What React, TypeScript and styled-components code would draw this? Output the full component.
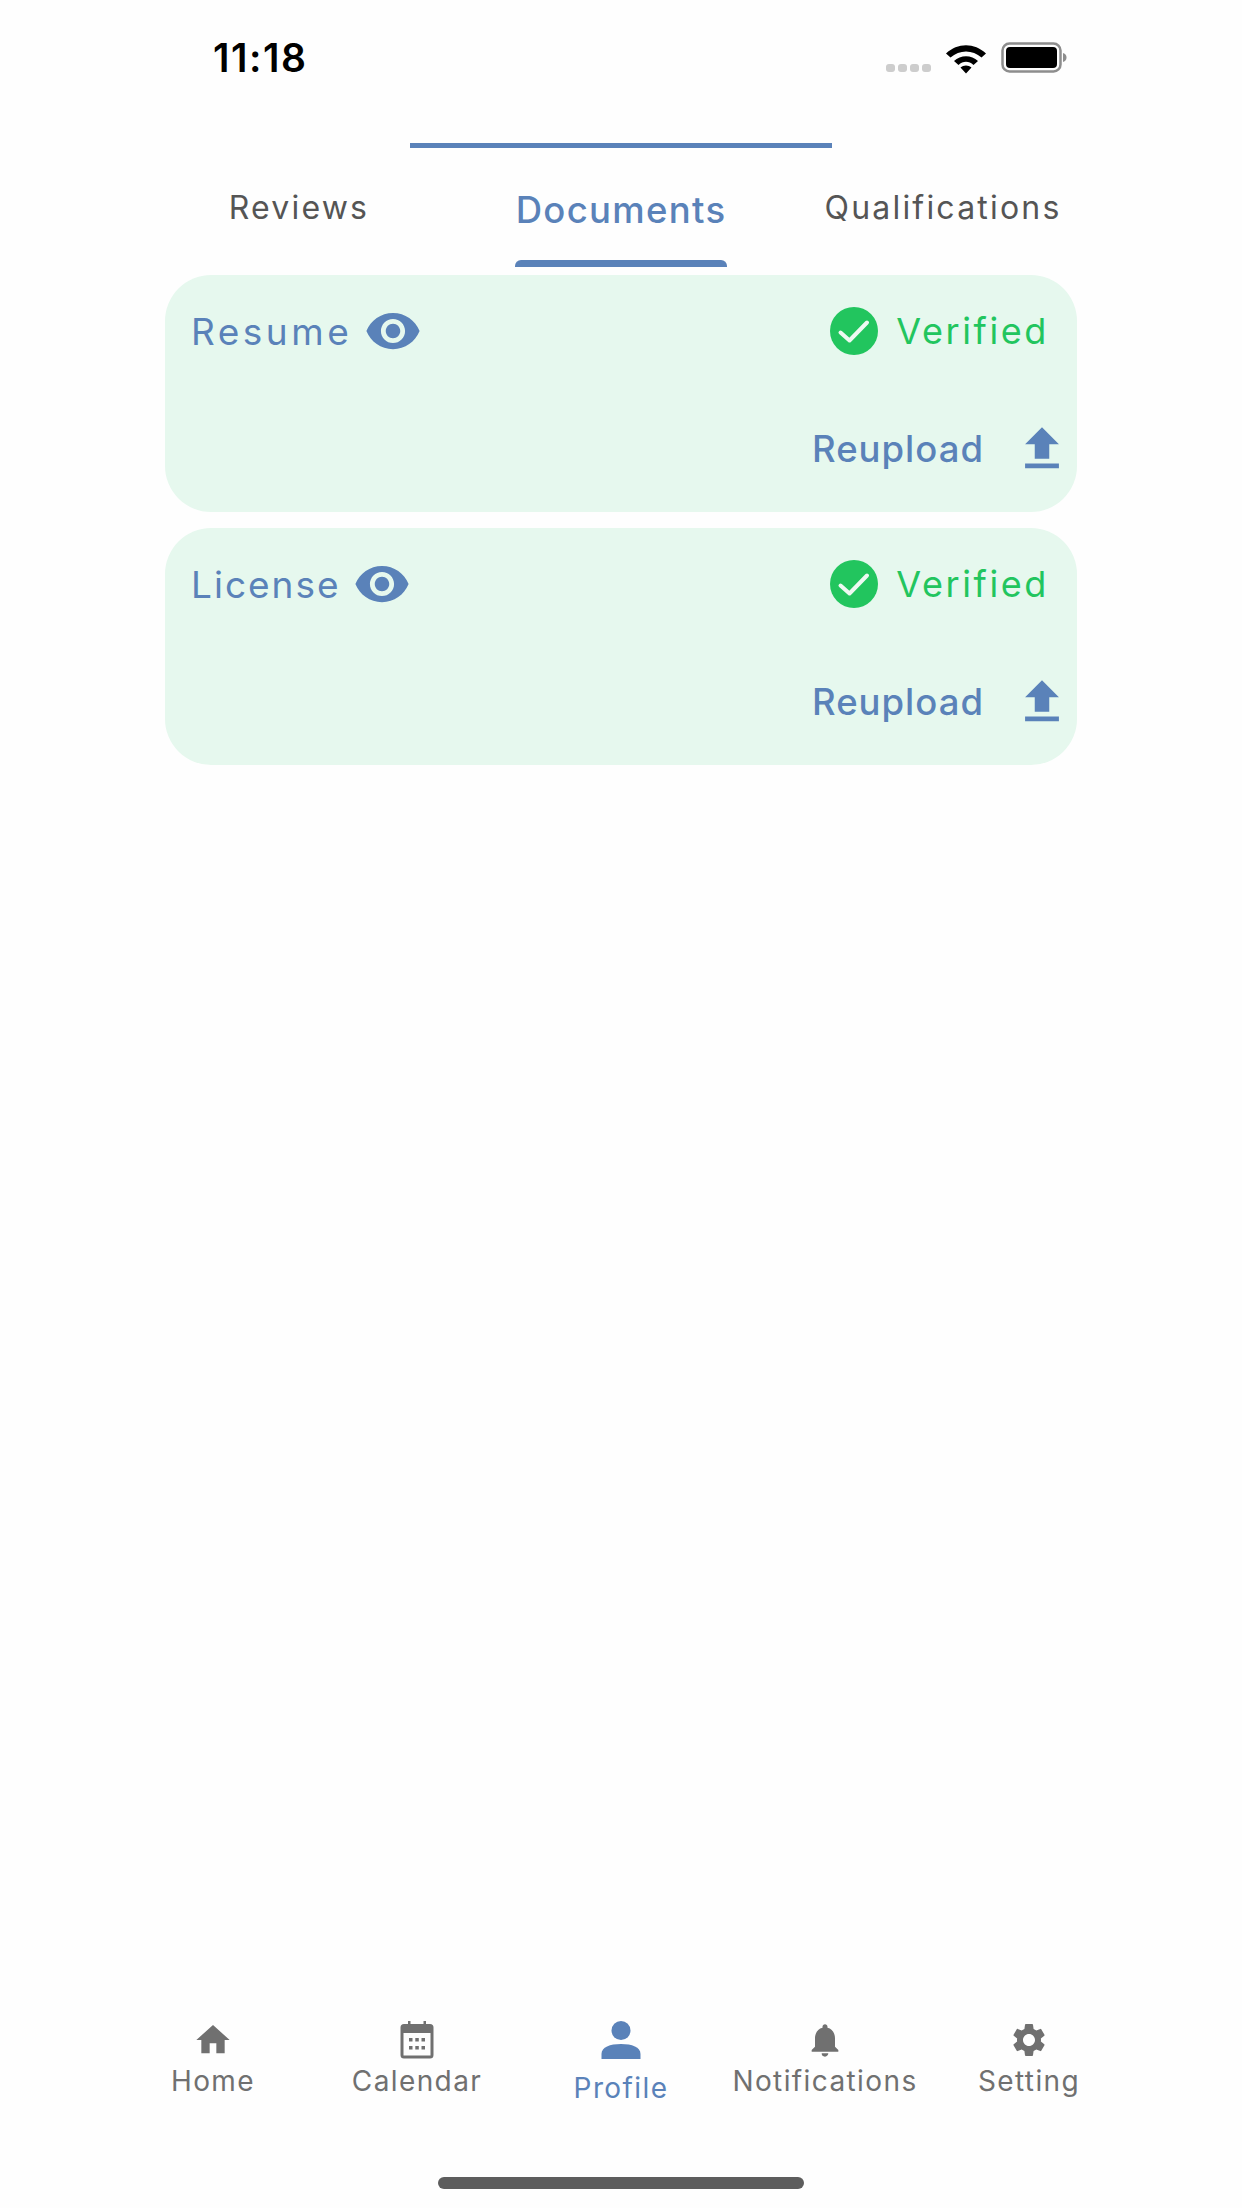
import React from 'react'
import styled, { createGlobalStyle } from 'styled-components'
import { MdFileUpload, MdHome, MdNotifications, MdSettings, MdVisibility } from 'react-icons/md'

// ------------------------------------------------ style
const BLUE = '#5a82b9'
const GREEN = '#22c55e'
const GREY = '#707070'

const GlobalStyle = createGlobalStyle`
  html, body {
    margin: 0;
    padding: 0;
    background: #fff;
  }
  * {
    box-sizing: border-box;
  }
`
const Page = styled.div`
  width: 1242px;
  height: 2208px;
  display: flex;
  flex-direction: column;
  background: #fefefe;
  font-family: Inter, 'Liberation Sans', sans-serif;
  overflow: hidden;
`
const StatusBar = styled.div`
  height: 143px;
  display: flex;
  justify-content: space-between;
  align-items: flex-start;
  padding: 33px 175px 0 213px;
`
const Time = styled.span`
  font-size: 39px;
  line-height: 50px;
  font-weight: 600;
  letter-spacing: 1.5px;
  color: #000;
`
const StatusIcons = styled.div`
  display: flex;
  align-items: flex-start;
  gap: 14px;
  padding-top: 9px;
`
const Signal = styled.div`
  display: flex;
  gap: 3px;
  margin-left: -2px;
  padding-top: 22px;
`
const SignalDot = styled.i`
  width: 9px;
  height: 8px;
  border-radius: 3px;
  background: #cdcdcd;
`
const TopBar = styled.div`
  width: 422px;
  height: 5px;
  margin: 0 auto;
  background: ${BLUE};
`
const Tabs = styled.div`
  width: 966px;
  margin: 0 auto;
  display: grid;
  grid-template-columns: repeat(3, 1fr);
  height: 127px;
`
const Tab = styled.div<{ $active?: boolean }>`
  display: flex;
  flex-direction: column;
  align-items: center;
  padding-top: ${(p) => (p.$active ? 39 : 37)}px;
  font-size: ${(p) => (p.$active ? 36.5 : 32)}px;
  line-height: 46px;
  font-weight: ${(p) => (p.$active ? 500 : 400)};
  letter-spacing: ${(p) => (p.$active ? 1.3 : 2.2)}px;
  color: ${(p) => (p.$active ? BLUE : '#555')};
`
const TabMark = styled.div`
  width: 212px;
  height: 7px;
  margin-top: 27px;
  border-radius: 6px 6px 0 0;
  background: ${BLUE};
`
const Cards = styled.div`
  width: 912px;
  margin: 0 auto;
  display: flex;
  flex-direction: column;
  gap: 16px;
`
const Card = styled.div`
  height: 237px;
  padding: 31px 28px 0 26px;
  border-radius: 46px;
  background: #e6f8ee;
`
const CardTop = styled.div`
  display: flex;
  justify-content: space-between;
  align-items: center;
  height: 50px;
`
const Name = styled.div<{ $spacing: number }>`
  display: flex;
  align-items: center;
  gap: 12px;
  font-size: 37px;
  letter-spacing: ${(p) => p.$spacing}px;
  color: ${BLUE};
  svg {
    display: block;
  }
`
const Status = styled.div`
  display: flex;
  align-items: center;
  gap: 18px;
  font-size: 36px;
  letter-spacing: 2.6px;
  color: ${GREEN};
`
const CardBottom = styled.div`
  display: flex;
  justify-content: flex-end;
  align-items: center;
  gap: 29px;
  height: 50px;
  margin-top: 68px;
  margin-right: -22px;
  font-size: 36.5px;
  font-weight: 500;
  letter-spacing: 1px;
  color: ${BLUE};
`
const BottomNav = styled.nav`
  margin-top: auto;
  width: 1020px;
  align-self: center;
  display: grid;
  grid-template-columns: repeat(5, 1fr);
`
const NavItem = styled.div<{ $active?: boolean }>`
  display: flex;
  flex-direction: column;
  align-items: center;
  height: 86px;
  font-size: 28px;
  letter-spacing: 1.4px;
  line-height: 34px;
  white-space: nowrap;
  color: ${(p) => (p.$active ? BLUE : GREY)};
`
const NavIcon = styled.div`
  width: 40px;
  height: 40px;
  display: flex;
  justify-content: center;
  align-items: center;
  margin-bottom: 2px;
`
const NavLabel = styled.span<{ $active?: boolean }>`
  margin-top: ${(p) => (p.$active ? 9 : 2)}px;
`
const HomeBarWrap = styled.div`
  padding: 71px 0 19px;
  display: flex;
  justify-content: center;
`
const HomeBar = styled.div`
  width: 366px;
  height: 12px;
  border-radius: 6px;
  background: #5d5d5d;
`

// ------------------------------------------------ icons
const WifiIcon = () => (
  <svg width="42" height="32" viewBox="0 0 42 32">
    <path
      d="M1 11.5C12.5 .5 29.5 .5 41 11.5L36.5 15.5C27.5 7.5 14.5 7.5 5.500 15.5ZM9 19C15.5 12.5 26.5 12.5 33 19L28.5 23C24 18.8 18 18.8 13.5 23ZM15.5 25.5C18.5 22.8 23.5 22.8 26.5 25.5L21 31.5Z"
      fill="#000"
    />
  </svg>
)

const BatteryIcon = () => (
  <svg width="66" height="32" viewBox="0 0 66 32">
    <rect x="1.5" y="1.5" width="58" height="28" rx="7" fill="none" stroke="#8d8d8d" strokeWidth="2.5" />
    <rect x="5" y="5" width="51" height="21" rx="4" fill="#000" />
    <path d="M62 11c2.5 .8 3.5 2.5 3.5 4.5S64.5 19.2 62 20z" fill="#8d8d8d" />
  </svg>
)

const CheckIcon = () => (
  <svg width="48" height="48" viewBox="0 0 48 48">
    <circle cx="24" cy="24" r="24" fill={GREEN} />
    <path d="M10.5 25.5L19.5 33.5L37 15.5" fill="none" stroke="#eef9f2" strokeWidth="4" strokeLinecap="round" strokeLinejoin="round" />
  </svg>
)

const CalendarIcon = () => (
  <svg width="34" height="38" viewBox="0 0 34 38" fill={GREY}>
    <path d="M8 0h2.5v5H8zM23.5 0H26v5h-2.5z" />
    <path
      fillRule="evenodd"
      d="M4 3h26a3.5 3.5 0 0 1 3.5 3.5V34a3.5 3.5 0 0 1-3.5 3.5H4A3.5 3.5 0 0 1 .5 34V6.5A3.5 3.5 0 0 1 4 3ZM3.5 12v22.5h27V12Z"
    />
    <path d="M9 17h3.5v3.5H9zM15.3 17h3.5v3.5h-3.5zM21.5 17H25v3.5h-3.5zM9 25h3.5v3.5H9zM15.3 25h3.5v3.5h-3.5zM21.5 25H25v3.5h-3.5z" />
  </svg>
)

const PersonIcon = () => (
  <svg width="40" height="38" viewBox="0 0 40 38" fill={BLUE}>
    <ellipse cx="20" cy="9.5" rx="9.5" ry="9.5" />
    <path d="M.5 38v-5C.5 26 9 23 20 23s19.5 3 19.5 10v5z" />
  </svg>
)

// ------------------------------------------------ comp
const DOCS = [
  { name: 'Resume', spacing: 3.5 },
  { name: 'License', spacing: 2 },
]

const NAV = [
  { label: 'Home', icon: <MdHome size={44} /> },
  { label: 'Calendar', icon: <CalendarIcon /> },
  { label: 'Profile', icon: <PersonIcon />, active: true },
  { label: 'Notifications', icon: <MdNotifications size={42} /> },
  { label: 'Setting', icon: <MdSettings size={44} /> },
]

export default function App() {
  return (
    <Page>
      <GlobalStyle />
      <StatusBar>
        <Time>11:18</Time>
        <StatusIcons>
          <Signal>
            <SignalDot />
            <SignalDot />
            <SignalDot />
            <SignalDot />
          </Signal>
          <WifiIcon />
          <BatteryIcon />
        </StatusIcons>
      </StatusBar>
      <TopBar />
      <Tabs>
        <Tab>Reviews</Tab>
        <Tab $active>
          Documents
          <TabMark />
        </Tab>
        <Tab>Qualifications</Tab>
      </Tabs>
      <Cards>
        {DOCS.map((doc) => (
          <Card key={doc.name}>
            <CardTop>
              <Name $spacing={doc.spacing}>
                {doc.name}
                <MdVisibility size={58} />
              </Name>
              <Status>
                <CheckIcon />
                Verified
              </Status>
            </CardTop>
            <CardBottom>
              Reupload
              <MdFileUpload size={58} />
            </CardBottom>
          </Card>
        ))}
      </Cards>
      <BottomNav>
        {NAV.map((item) => (
          <NavItem key={item.label} $active={item.active}>
            <NavIcon>{item.icon}</NavIcon>
            <NavLabel $active={item.active}>{item.label}</NavLabel>
          </NavItem>
        ))}
      </BottomNav>
      <HomeBarWrap>
        <HomeBar />
      </HomeBarWrap>
    </Page>
  )
}
